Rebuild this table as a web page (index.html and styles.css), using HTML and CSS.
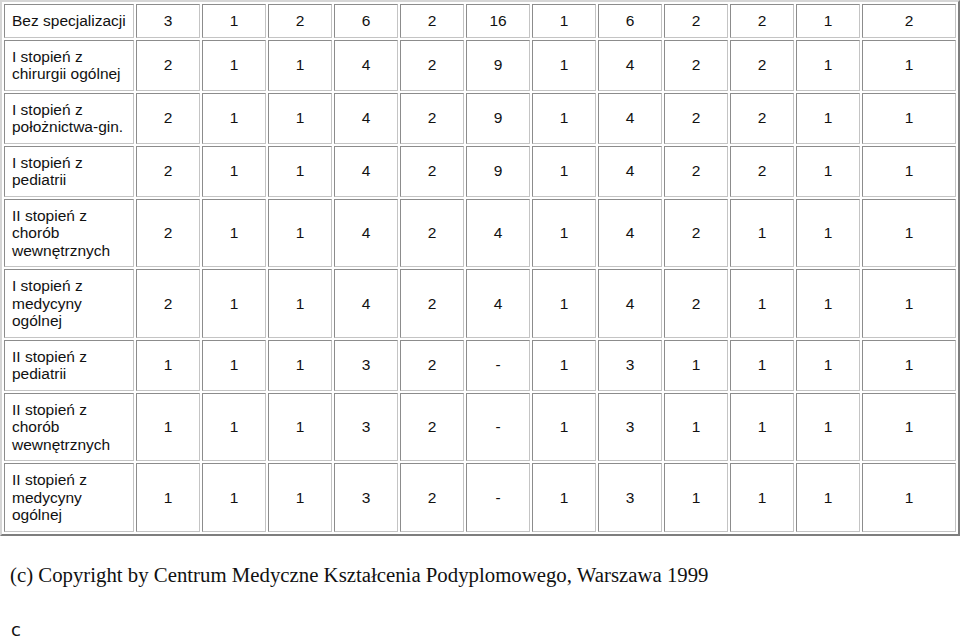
FILE: index.html
```html
<!DOCTYPE html>
<html lang="pl">
<head>
<meta charset="utf-8">
<title>Specjalizacje</title>
<link rel="stylesheet" href="styles.css">
</head>
<body>
<table class="grid">
<colgroup>
<col class="c-name">
<col class="c-num"><col class="c-num"><col class="c-num"><col class="c-num"><col class="c-num"><col class="c-num">
<col class="c-num"><col class="c-num"><col class="c-num"><col class="c-num"><col class="c-num">
<col class="c-last">
</colgroup>
<tbody>
<tr><td class="name nowrap">Bez specjalizacji</td><td>3</td><td>1</td><td>2</td><td>6</td><td>2</td><td>16</td><td>1</td><td>6</td><td>2</td><td>2</td><td>1</td><td>2</td></tr>
<tr><td class="name">I stopień z chirurgii ogólnej</td><td>2</td><td>1</td><td>1</td><td>4</td><td>2</td><td>9</td><td>1</td><td>4</td><td>2</td><td>2</td><td>1</td><td>1</td></tr>
<tr><td class="name">I stopień z położnictwa-gin.</td><td>2</td><td>1</td><td>1</td><td>4</td><td>2</td><td>9</td><td>1</td><td>4</td><td>2</td><td>2</td><td>1</td><td>1</td></tr>
<tr><td class="name">I stopień z pediatrii</td><td>2</td><td>1</td><td>1</td><td>4</td><td>2</td><td>9</td><td>1</td><td>4</td><td>2</td><td>2</td><td>1</td><td>1</td></tr>
<tr><td class="name">II stopień z chorób wewnętrznych</td><td>2</td><td>1</td><td>1</td><td>4</td><td>2</td><td>4</td><td>1</td><td>4</td><td>2</td><td>1</td><td>1</td><td>1</td></tr>
<tr><td class="name">I stopień z medycyny ogólnej</td><td>2</td><td>1</td><td>1</td><td>4</td><td>2</td><td>4</td><td>1</td><td>4</td><td>2</td><td>1</td><td>1</td><td>1</td></tr>
<tr><td class="name">II stopień z pediatrii</td><td>1</td><td>1</td><td>1</td><td>3</td><td>2</td><td>-</td><td>1</td><td>3</td><td>1</td><td>1</td><td>1</td><td>1</td></tr>
<tr><td class="name">II stopień z chorób wewnętrznych</td><td>1</td><td>1</td><td>1</td><td>3</td><td>2</td><td>-</td><td>1</td><td>3</td><td>1</td><td>1</td><td>1</td><td>1</td></tr>
<tr><td class="name">II stopień z medycyny ogólnej</td><td>1</td><td>1</td><td>1</td><td>3</td><td>2</td><td>-</td><td>1</td><td>3</td><td>1</td><td>1</td><td>1</td><td>1</td></tr>
</tbody>
</table>
<p class="copyright">(c) Copyright by Centrum Medyczne Kształcenia Podyplomowego, Warszawa 1999</p>
<p class="tail">c</p>
</body>
</html>
```
FILE: styles.css
```css
html, body {
  margin: 0;
  padding: 0;
  background: #ffffff;
}
body {
  width: 960px;
  height: 639px;
  overflow: hidden;
}
.grid {
  table-layout: fixed;
  width: 960px;
  border-collapse: separate;
  border-spacing: 2px;
  border-style: solid;
  border-width: 2px;
  border-color: #d6d6d6 #7e7e7e #7e7e7e #d6d6d6;
  font-family: "Liberation Sans", Arial, sans-serif;
  font-size: 15.5px;
  line-height: 17.5px;
  color: #111111;
}
.c-name { width: 130px; }
.c-num { width: 64px; }
.c-last { width: 94px; }
.grid td {
  box-sizing: border-box;
  padding: 7px;
  border: 1px solid;
  border-color: #8c8c8c #c4c4c4 #c4c4c4 #8c8c8c;
  text-align: center;
  vertical-align: middle;
}
.grid td.name {
  text-align: left;
}
.grid td.nowrap {
  white-space: nowrap;
}
.copyright {
  margin: 27px 0 0 10px;
  font-family: "Liberation Serif", "Times New Roman", serif;
  font-size: 20.8px;
  line-height: 24px;
  color: #111111;
}
.tail {
  margin: 33px 0 0 11px;
  font-family: "DejaVu Sans", sans-serif;
  font-size: 18px;
  line-height: 20px;
  color: #111111;
}
```
